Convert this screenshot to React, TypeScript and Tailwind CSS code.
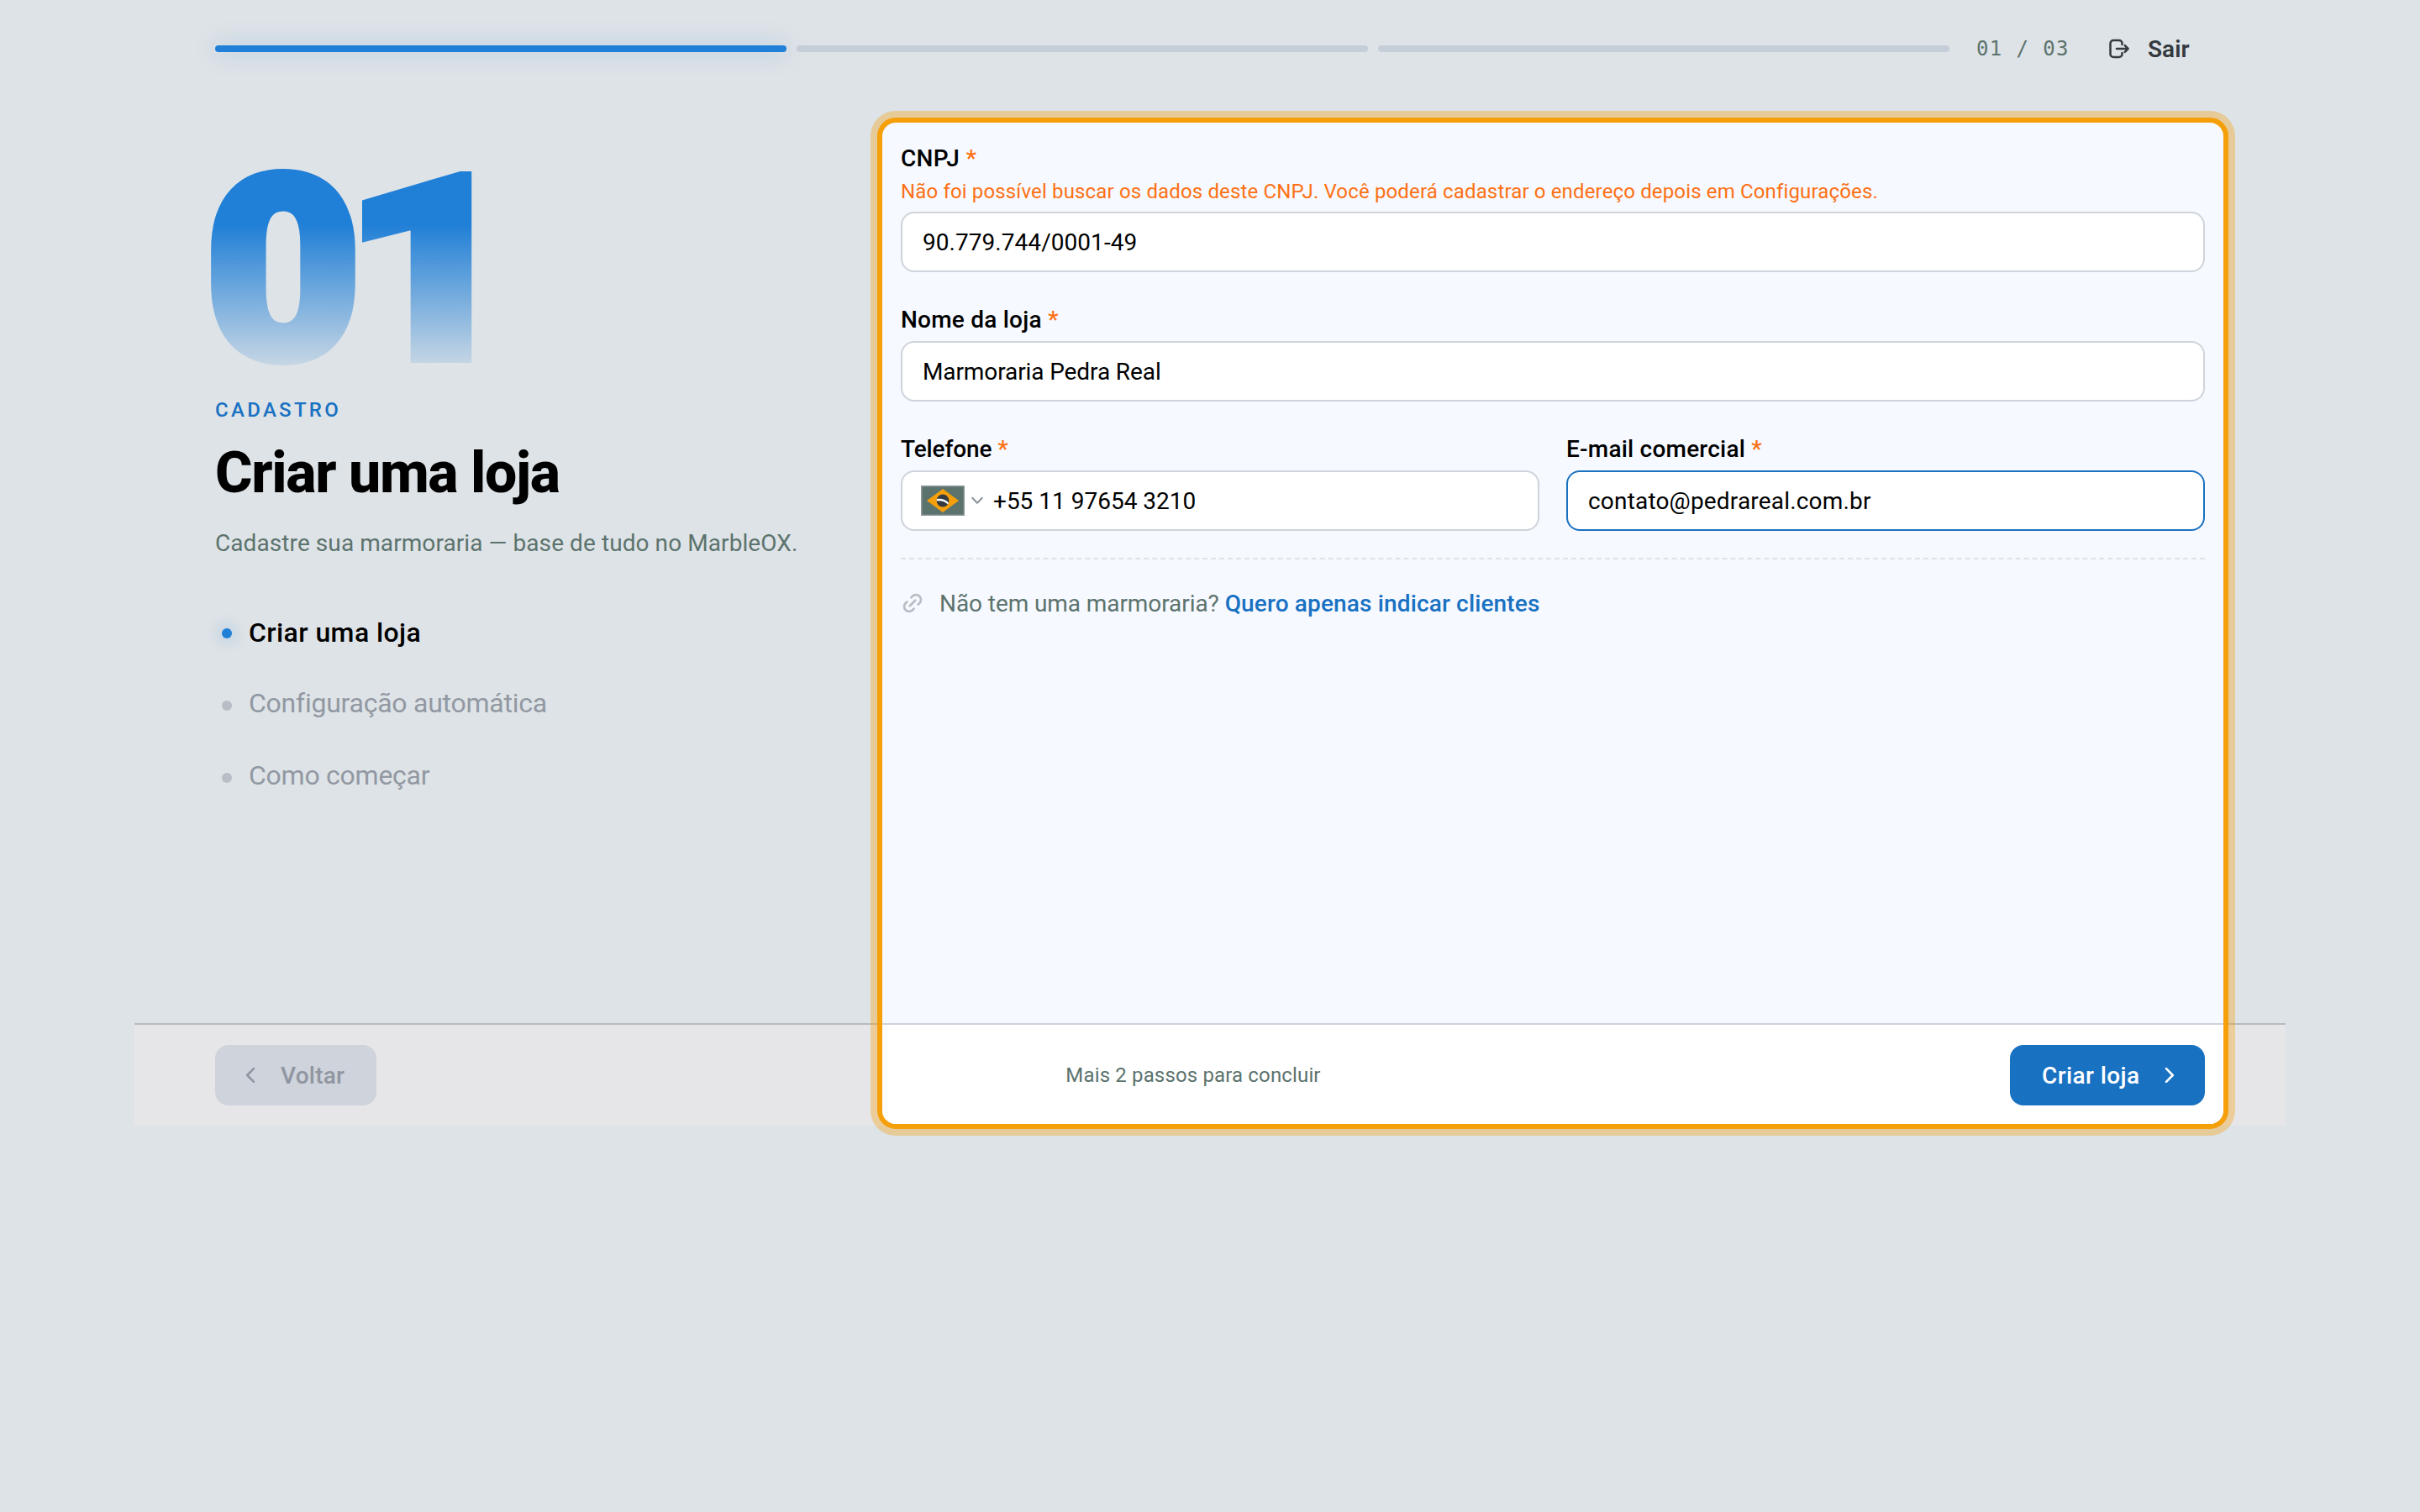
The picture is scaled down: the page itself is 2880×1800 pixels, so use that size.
import type { ReactNode } from "react";

const steps = [
  { label: "Criar uma loja", active: true },
  { label: "Configuração automática", active: false },
  { label: "Como começar", active: false },
];

function LogOutIcon() {
  return (
    <svg width="28" height="28" viewBox="0 0 28 28" fill="none" stroke="currentColor" strokeWidth="2.5" strokeLinecap="round" strokeLinejoin="round">
      <path d="M17.5 9V7.6a3.6 3.6 0 0 0-3.600-3.600H7.100a3.600 3.600 0 0 0-3.600 3.600v12.800a3.600 3.600 0 0 0 3.600 3.600h6.800a3.600 3.600 0 0 0 3.600-3.600V19" />
      <path d="M11 14h13.600M20.800 10.200l3.800 3.800-3.800 3.800" />
    </svg>
  );
}

function LinkIcon() {
  return (
    <svg width="28" height="28" viewBox="0 0 24 24" fill="none" stroke="currentColor" strokeWidth="2.3" strokeLinecap="round" strokeLinejoin="round" className="-rotate-45">
      <path d="M9 17H7A5 5 0 0 1 7 7h2" />
      <path d="M15 7h2a5 5 0 1 1 0 10h-2" />
      <path d="M8 12h8" />
    </svg>
  );
}

function Chevron({ className = "" }: { className?: string }) {
  return (
    <svg width="12" height="20" viewBox="0 0 12 20" fill="none" stroke="currentColor" strokeWidth="2.6" strokeLinecap="round" strokeLinejoin="round" className={className}>
      <path d="M2 2.2 9.8 10 2 17.8" />
    </svg>
  );
}

function BrazilFlag() {
  return (
    <svg width="52" height="36" viewBox="0 0 52 36">
      <rect width="52" height="36" fill="#8c979b" />
      <rect x="1.5" y="1.5" width="49" height="33" fill="#5c736d" />
      <path d="M26 4 45 18 26 32 7 18Z" fill="#f59f0a" />
      <circle cx="26" cy="18" r="7.4" fill="#343a40" />
      <path d="M18.8 16.2c5-1.2 10.600 0.400 14.2 4.200l-0.900 2c-3.600-3.600-8.500-5-13.500-3.900Z" fill="#fff" />
    </svg>
  );
}

function Label({ children, className = "tracking-[0.3px]" }: { children: ReactNode; className?: string }) {
  return (
    <div className={`h-8 text-[28px] leading-[34px] font-medium whitespace-nowrap text-black ${className}`}>
      {children} <span className="text-[#fd7014]">*</span>
    </div>
  );
}

function Input({ children, className = "border-[#ced4da]" }: { children: ReactNode; className?: string }) {
  return (
    <div className={`flex h-[72px] items-center rounded-2xl border-2 bg-white px-6 text-[28px] text-black ${className}`}>
      {children}
    </div>
  );
}

function BigDigit({ children, className }: { children: ReactNode; className: string }) {
  return (
    <span
      className={`block h-[272px] w-[178px] origin-left bg-linear-to-b from-[#207fd6] from-30% to-[#207fd6]/0 bg-clip-text text-[304px] leading-[272px] font-black text-transparent [-webkit-text-stroke:12px_transparent] ${className}`}
    >
      {children}
    </span>
  );
}

export default function App() {
  return (
    <div className="relative isolate h-[1800px] w-[2880px] overflow-hidden bg-[#dee3e7] font-['Roboto',sans-serif]">
      {/* Highlight frame around the current step */}
      <div className="absolute top-[140px] left-[1044px] flex h-[1204px] w-[1608px] flex-col justify-end overflow-hidden rounded-[22px] border-[6px] border-[#f59f0a] bg-[#f6f9ff] shadow-[0_0_0_8px_rgba(245,159,10,0.35)]">
        <div className="h-[120px] border-t-2 border-[#ced2da] bg-white" />
      </div>

      <div className="mx-auto w-[2560px]">
        <header className="relative flex h-[116px] items-center px-24">
          <div className="flex w-[2064px] gap-3">
            <div className="h-2 flex-1 rounded-full bg-[#207fd6] shadow-[0_0_28px_rgba(32,127,214,0.32)]" />
            <div className="h-2 flex-1 rounded-full bg-[#c5cdd9]" />
            <div className="h-2 flex-1 rounded-full bg-[#c5cdd9]" />
          </div>
          <div className="ml-8 w-[112px] font-['DejaVu_Sans_Mono',monospace] text-2xl tracking-[1.4px] whitespace-nowrap text-[#5c736d]">
            01 / 03
          </div>
          <button className="ml-11 flex items-center gap-5 text-[28px] font-semibold text-[#343a40]">
            <LogOutIcon />
            <span className="pt-0.5">Sair</span>
          </button>
        </header>

        <main className="relative flex h-[1102px] px-24">
          <section className="w-[816px] pt-[70px]">
            <div className="-ml-[12px] flex">
              <BigDigit className="scale-x-[1.055]">0</BigDigit>
              <BigDigit className="-ml-[13px] scale-x-[1.17]">1</BigDigit>
            </div>
            <div className="mt-3.5 h-8 text-2xl leading-8 font-medium tracking-[3.3px] text-[#1971c2]">CADASTRO</div>
            <h1 className="mt-5 h-[76px] text-[68px] leading-[79px] font-extrabold tracking-[-1.3px] text-black">Criar uma loja</h1>
            <p className="mt-[26px] h-10 text-[28px] leading-[42px] tracking-[0.08px] whitespace-nowrap text-[#5c736d]">
              Cadastre sua marmoraria — base de tudo no MarbleOX.
            </p>
            <ul className="mt-[45px]">
              {steps.map((s) => (
                <li key={s.label} className="flex h-[86px] items-center gap-5 pl-2 text-[32px]">
                  <span
                    className={
                      s.active
                        ? "size-3 rounded-full bg-[#207fd6] shadow-[0_0_16px_5px_rgba(32,127,214,0.16)]"
                        : "size-3 rounded-full bg-[#b8bdc6]"
                    }
                  />
                  <span className={s.active ? "pb-0.5 font-medium tracking-[0.42px] text-black" : "pb-1.5 tracking-[-0.25px] text-[#9298a2]"}>
                    {s.label}
                  </span>
                </li>
              ))}
            </ul>
          </section>

          <section className="flex-1 pt-14">
            <Label>CNPJ</Label>
            <p className="mt-2 mb-2 h-8 text-2xl leading-8 tracking-[0.15px] whitespace-nowrap text-[#fd7014]">
              Não foi possível buscar os dados deste CNPJ. Você poderá cadastrar o endereço depois em Configurações.
            </p>
            <Input><span className="pt-0.5 tracking-[0.05px]">90.779.744/0001-49</span></Input>

            <div className="mt-10 flex flex-col gap-2.5">
              <Label className="tracking-[0.22px]">Nome da loja</Label>
              <Input><span className="pt-0.5 tracking-[-0.1px]">Marmoraria Pedra Real</span></Input>
            </div>

            <div className="mt-10 grid grid-cols-2 gap-8">
              <div className="flex flex-col gap-2.5">
                <Label className="tracking-[-0.1px]">Telefone</Label>
                <Input>
                  <span className="-ml-0.5"><BrazilFlag /></span>
                  <svg width="14" height="10" viewBox="0 0 14 10" fill="none" stroke="#8c939d" strokeWidth="2" strokeLinecap="round" strokeLinejoin="round" className="ml-2">
                    <path d="M1.200 1.800 7 7.800 12.800 1.800" />
                  </svg>
                  <span className="ml-3 pt-0.5">+55 11 97654 3210</span>
                </Input>
              </div>
              <div className="flex flex-col gap-2.5">
                <Label className="tracking-[0.22px]">E-mail comercial</Label>
                <Input className="border-[#1971c2]"><span className="pt-0.5 tracking-[0.18px]">contato@pedrareal.com.br</span></Input>
              </div>
            </div>

            <div className="mt-8 flex h-[74px] items-center gap-4 border-t-2 border-dashed border-[#dee2e6] pt-8 text-[28px]">
              <span className="text-[#b8bdc3]"><LinkIcon /></span>
              <p className="ml-0.5 h-10 leading-[42px] whitespace-nowrap text-[#5c736d]">
                <span className="tracking-[-0.08px]">Não tem uma marmoraria?</span>{" "}
                <a className="font-medium tracking-[0.15px] text-[#1971c2]">Quero apenas indicar clientes</a>
              </p>
            </div>
          </section>
        </main>

        <footer className="relative -z-10 h-[122px] border-t-2 border-[#b4bbc1] bg-[#e6e6e8]" />
        <div className="relative -mt-[120px] flex h-[120px] items-center justify-between px-24 text-[28px] font-medium">
          <button className="flex h-[72px] w-48 items-center gap-[30px] rounded-2xl bg-[#ced3dc] pl-9 text-[#9096a0]">
            <Chevron className="rotate-180" />
            <span className="pt-0.5 tracking-[0.22px]">Voltar</span>
          </button>
          <span className="text-2xl font-normal tracking-[0.15px] text-[#5c736d]">Mais 2 passos para concluir</span>
          <button className="flex h-[72px] w-[232px] items-center justify-between rounded-2xl bg-[#1971c2] pr-9 pl-[38px] text-white">
            <span className="pt-0.5 tracking-[0.4px]">Criar loja</span>
            <Chevron />
          </button>
        </div>
      </div>
    </div>
  );
}
